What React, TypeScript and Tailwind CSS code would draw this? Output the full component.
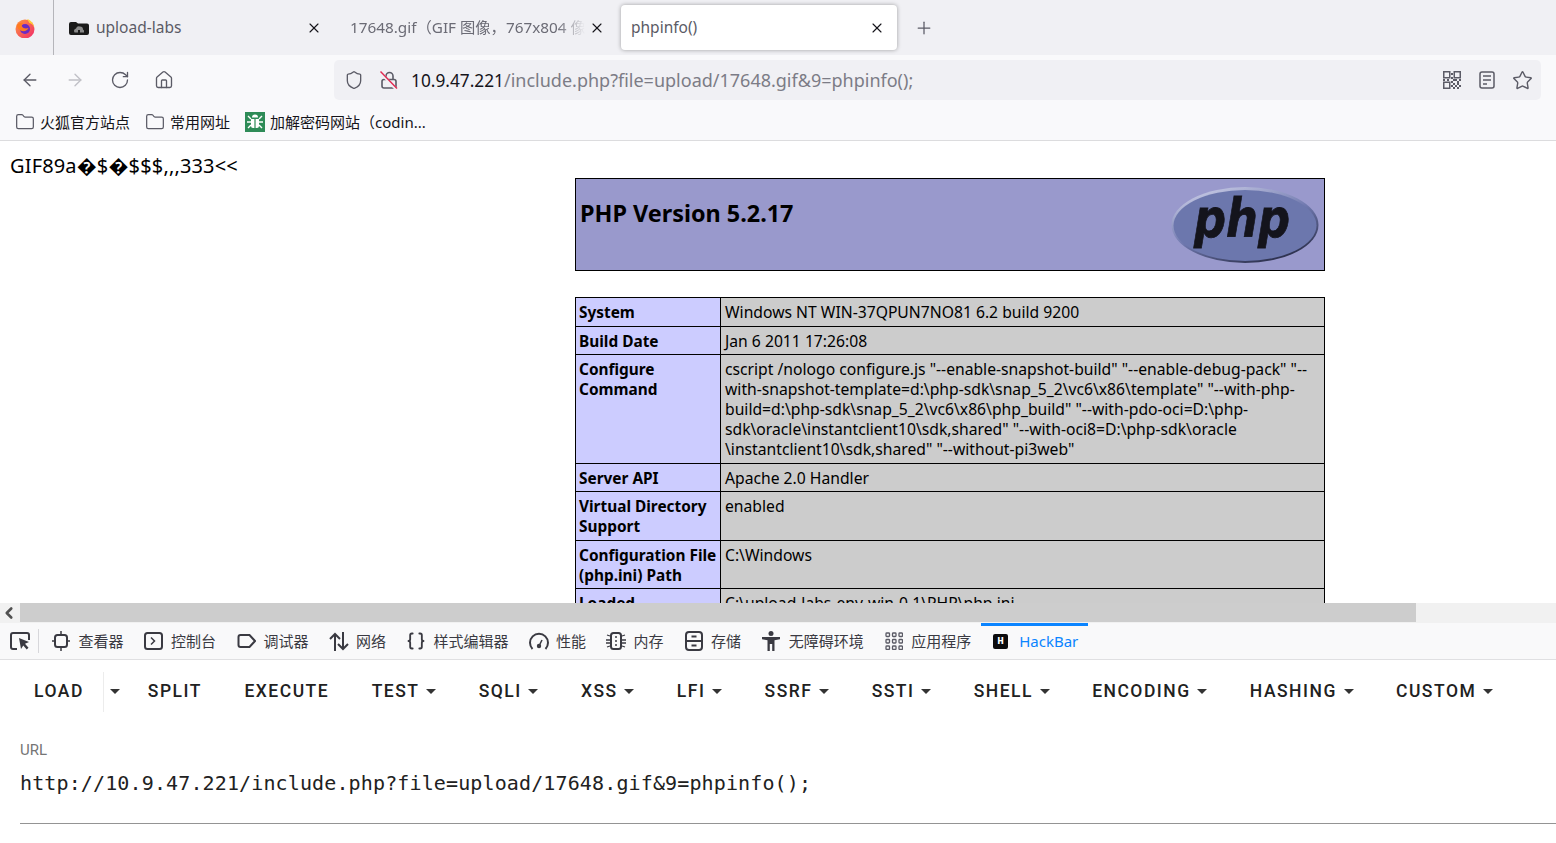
import React from 'react';
import { ArrowLeft, ArrowRight, RotateCw, Home, Shield, Star, X, Plus, Folder, Braces, ChevronLeft } from 'lucide-react';

const sans = "font-['Noto_Sans','Noto_Sans_CJK_SC',sans-serif]";

function FirefoxLogo() {
  return (
    <svg width="20" height="20" viewBox="0 0 20 20">
      <defs>
        <linearGradient id="fx" x1="0" y1="0" x2="1" y2="1">
          <stop offset="0" stopColor="#ff9a3c" />
          <stop offset="1" stopColor="#f0286c" />
        </linearGradient>
      </defs>
      <circle cx="10" cy="11" r="9.5" fill="url(#fx)" />
      <path d="M12 1c4 1 7 5 7.4 9-1-3-3-4.500-5-5C14 4 13 2.500 12 1z" fill="#ffcf33" />
      <circle cx="10" cy="11" r="5" fill="#6a2bc4" />
      <path d="M2 7c2-2 4-2.500 6-2 -1 1-1.500 2-1 3.500 1 2 4 2.500 6.500 1.500-1 3-5 4-8 2.500C3 11.500 2 9.500 2 7z" fill="#ff7a1f" />
    </svg>
  );
}

function UploadFavicon() {
  return (
    <svg width="20" height="16" viewBox="0 0 20 16">
      <path d="M0 4q0-2 2-2h5l2 1.500h9q2 0 2 2V13q0 2-2 2H2q-2 0-2-2z" fill="#1b1b1b" />
      <path d="M5.500 12.500q-1.500-3 1.500-4 1-3 4-2 3 0 3 3 1.500.5 1 3z" fill="#8b8b8b" />
      <rect x="9" y="10" width="2" height="3" fill="#1b1b1b" />
    </svg>
  );
}

function InsecureLock() {
  return (
    <svg width="20" height="20" viewBox="0 0 20 20" fill="none">
      <path d="M7 9.500V6a3.500 3.500 0 0 1 7 0v3.500" stroke="#5b5b66" strokeWidth="1.600" />
      <rect x="3" y="9.500" width="14" height="8.500" rx="2" stroke="#5b5b66" strokeWidth="1.600" />
      <path d="M2 3l15 16" stroke="#f0f0f4" strokeWidth="3" />
      <path d="M1.500 1.500l16.500 17" stroke="#e22850" strokeWidth="1.400" />
    </svg>
  );
}

function QrIcon() {
  return (
    <svg width="18" height="18" viewBox="0 0 18 18" fill="none">
      <g stroke="#5b5b66" strokeWidth="1.500">
        <rect x="0.750" y="0.750" width="6" height="6" />
        <rect x="11.250" y="0.750" width="6" height="6" />
        <rect x="0.750" y="11.250" width="6" height="6" />
      </g>
      <path d="M8 2h2v2H8zM8 6h2v2H8zM0 8h2v2H0zM4 8h2v2H4zM8 10h2v2H8zM12 8h2v2h-2zM16 8h2v2h-2zM10 8h2v2h-2zM14 10h2v2h-2zM10 12h2v2h-2zM14 12h2v2h-2zM8 14h2v2H8zM12 14h2v2h-2zM16 14h2v2h-2zM10 16h2v2h-2zM14 16h2v2h-2z" fill="#5b5b66" />
    </svg>
  );
}

function BugIcon() {
  return (
    <svg width="20" height="20" viewBox="0 0 20 20">
      <rect width="20" height="20" fill="#2e8b57" />
      <path d="M7 5.500a3 3 0 0 1 6 0z" fill="#fff" />
      <path d="M6 7h3.400v9H8q-2 0-2-2zM10.600 7H14v7q0 2-2 2h-1.400z" fill="#fff" />
      <path d="M3 4l3 3M17 4l-3 3M2 10h4M18 10h-4M3 16l3-3M17 16l-3-3" stroke="#fff" strokeWidth="1.400" />
    </svg>
  );
}

function ReaderIcon() {
  return (
    <svg width="16" height="18" viewBox="0 0 16 18" fill="none" stroke="#5b5b66" strokeWidth="1.500">
      <rect x="1" y="1" width="14" height="16" rx="2" />
      <path d="M4 5h8M4 9h8M4 13h4" />
    </svg>
  );
}

function PickerIcon() {
  return (
    <svg width="20" height="20" viewBox="0 0 20 20" fill="none">
      <path d="M7 18H3q-2 0-2-2V4q0-2 2-2h14q2 0 2 2v5" stroke="#3a3a42" strokeWidth="2" />
      <path d="M9 7l10 4-4 1.800 3.500 4-1.800 1.600-3.400-4L11 18z" fill="#3a3a42" />
    </svg>
  );
}

function InspectorIcon() {
  return (
    <svg width="18" height="20" viewBox="0 0 18 20" fill="none" stroke="#3a3a42" strokeWidth="2">
      <rect x="3" y="4" width="12" height="12" rx="2.500" />
      <path d="M9 0v4M9 16v4M0 10h3M15 10h3" strokeWidth="1.500" />
    </svg>
  );
}

function ConsoleIcon() {
  return (
    <svg width="19" height="18" viewBox="0 0 19 18" fill="none" stroke="#3a3a42" strokeWidth="2">
      <rect x="1" y="1" width="17" height="16" rx="2.500" />
      <path d="M7 5.500l3.500 3.500L7 12.500" strokeWidth="1.500" />
    </svg>
  );
}

function DebuggerIcon() {
  return (
    <svg width="19" height="16" viewBox="0 0 19 16" fill="none" stroke="#3a3a42" strokeWidth="2">
      <path d="M3.500 2h9L18 8l-5.500 6h-9Q1.500 14 1.500 12V4q0-2 2-2z" />
    </svg>
  );
}

function NetworkIcon() {
  return (
    <svg width="20" height="19" viewBox="0 0 20 19" fill="none" stroke="#3a3a42" strokeWidth="2">
      <path d="M6 19V2M1 7l5-5 5 5" />
      <path d="M14 0v17M9 12l5 5 5-5" />
    </svg>
  );
}

function PerformanceIcon() {
  return (
    <svg width="20" height="18" viewBox="0 0 20 18" fill="none" stroke="#3a3a42" strokeWidth="2">
      <path d="M3.500 17A9 9 0 1 1 16.500 17" />
      <circle cx="10" cy="14" r="2.200" fill="#3a3a42" stroke="none" />
      <path d="M10 14l3-6" strokeWidth="1.600" />
    </svg>
  );
}

function MemoryIcon() {
  return (
    <svg width="20" height="20" viewBox="0 0 20 20" fill="none" stroke="#3a3a42">
      <rect x="5" y="2" width="10" height="16" rx="2.500" strokeWidth="2" />
      <path d="M9 6h2M9 10h2M9 14h2" strokeWidth="1.500" />
      <path d="M1 4l3 1M0 9h4M0 12h4M1 16l3-1M19 4l-3 1M20 9h-4M20 12h-4M19 16l-3-1" strokeWidth="1.300" />
    </svg>
  );
}

function StorageIcon() {
  return (
    <svg width="18" height="20" viewBox="0 0 18 20" fill="none" stroke="#3a3a42" strokeWidth="2">
      <rect x="1" y="1" width="16" height="18" rx="3" />
      <path d="M1 10h16M6.500 5.500h5M6.500 14.500h5" />
    </svg>
  );
}

function AccessibilityIcon() {
  return (
    <svg width="18" height="20" viewBox="0 0 18 20" fill="#3a3a42">
      <circle cx="9" cy="2.500" r="2.500" />
      <path d="M0 6h18v2.200l-5.500 1V20h-2.300v-7H7.800v7H5.500V9.200L0 8.200z" />
    </svg>
  );
}

function AppsIcon() {
  const cells = [1, 7.500, 14];
  return (
    <svg width="18" height="18" viewBox="0 0 18 18" fill="none" stroke="#5b5b66" strokeWidth="1.300">
      {cells.map((y) => cells.map((x) => <rect key={`${x}-${y}`} x={x} y={y} width="3.500" height="3.500" rx="0.800" />))}
    </svg>
  );
}

function PhpLogo() {
  return (
    <svg width="150" height="78" viewBox="0 0 150 78">
      <defs>
        <linearGradient id="phpedge" x1="0.2" y1="0" x2="0.8" y2="1">
          <stop offset="0" stopColor="#c9cce6" />
          <stop offset="0.5" stopColor="#6f78ae" />
          <stop offset="1" stopColor="#23263f" />
        </linearGradient>
      </defs>
      <ellipse cx="75" cy="39" rx="73.500" ry="38" fill="url(#phpedge)" />
      <ellipse cx="75" cy="39.500" rx="71.500" ry="35.500" fill="#6c77ad" />
      <text x="24" y="51" fontFamily="'DejaVu Sans', sans-serif" fontWeight="700" fontStyle="italic" fontSize="53" textLength="96" lengthAdjust="spacingAndGlyphs" fill="#14141c" stroke="#14141c" strokeWidth="0.800">php</text>
    </svg>
  );
}

const devTabs = [
  { icon: <InspectorIcon />, label: '查看器' },
  { icon: <ConsoleIcon />, label: '控制台' },
  { icon: <DebuggerIcon />, label: '调试器' },
  { icon: <NetworkIcon />, label: '网络' },
  { icon: <Braces size={20} strokeWidth={2.200} color="#3a3a42" />, label: '样式编辑器' },
  { icon: <PerformanceIcon />, label: '性能' },
  { icon: <MemoryIcon />, label: '内存' },
  { icon: <StorageIcon />, label: '存储' },
  { icon: <AccessibilityIcon />, label: '无障碍环境' },
  { icon: <AppsIcon />, label: '应用程序' },
];

const hackMenu = [
  { label: 'SPLIT', caret: false },
  { label: 'EXECUTE', caret: false },
  { label: 'TEST', caret: true },
  { label: 'SQLI', caret: true },
  { label: 'XSS', caret: true },
  { label: 'LFI', caret: true },
  { label: 'SSRF', caret: true },
  { label: 'SSTI', caret: true },
  { label: 'SHELL', caret: true },
  { label: 'ENCODING', caret: true },
  { label: 'HASHING', caret: true },
  { label: 'CUSTOM', caret: true },
];

const infoRows = [
  { h: 'h-[29px]', k: 'System', v: 'Windows NT WIN-37QPUN7NO81 6.2 build 9200' },
  { h: 'h-[28px]', k: 'Build Date', v: 'Jan 6 2011 17:26:08' },
  {
    h: 'h-[109px]',
    k: 'Configure Command',
    v: 'cscript /nologo configure.js "--enable-snapshot-build" "--enable-debug-pack" "--\nwith-snapshot-template=d:\\php-sdk\\snap_5_2\\vc6\\x86\\template" "--with-php-\nbuild=d:\\php-sdk\\snap_5_2\\vc6\\x86\\php_build" "--with-pdo-oci=D:\\php-\nsdk\\oracle\\instantclient10\\sdk,shared" "--with-oci8=D:\\php-sdk\\oracle\n\\instantclient10\\sdk,shared" "--without-pi3web"',
  },
  { h: 'h-[28px]', k: 'Server API', v: 'Apache 2.0 Handler' },
  { h: 'h-[49px]', k: 'Virtual Directory Support', v: 'enabled' },
  { h: 'h-[48px]', k: 'Configuration File (php.ini) Path', v: 'C:\\Windows' },
  { h: 'h-[48px]', k: 'Loaded Configuration File', v: 'C:\\upload-labs-env-win-0.1\\PHP\\php.ini' },
];

function Caret() {
  return <span className="h-0 w-0 border-x-[5px] border-t-[5px] border-x-transparent border-t-[#333]" />;
}

export default function App() {
  return (
    <div className={`flex h-[843px] w-[1556px] flex-col overflow-hidden bg-white ${sans}`}>
      {/* Tab strip */}
      <div className="flex h-[55px] shrink-0 items-center bg-[#f0f0f4]">
        <div className="flex h-full w-[54px] items-center justify-center border-r border-[#b5b5ba] pr-[3px]">
          <FirefoxLogo />
        </div>
        <div className="flex h-[45px] w-[283px] items-center pl-[15px] pr-[15px] text-[15.500px] text-[#5b5b66]">
          <UploadFavicon />
          <span className="ml-[7px] flex-1">upload-labs</span>
          <X size={16} strokeWidth={1.700} color="#15141a" />
        </div>
        <div className="flex h-[45px] w-[284px] items-center pl-[13px] pr-[16px] text-[15.300px] text-[#6b6b75]">
          <span className="flex-1 overflow-hidden whitespace-nowrap [mask-image:linear-gradient(to_right,#000_88%,transparent_100%)]">17648.gif（GIF 图像，767x804 像素）</span>
          <X size={16} strokeWidth={1.700} color="#15141a" className="ml-[4px] shrink-0" />
        </div>
        <div className="flex h-[45px] w-[276px] items-center rounded-[4px] bg-white pl-[10px] pr-[12px] text-[15.500px] text-[#5b5b66] shadow-[0_0_4px_rgba(0,0,0,0.35)]">
          <span className="flex-1">phpinfo()</span>
          <X size={16} strokeWidth={1.700} color="#15141a" />
        </div>
        <Plus size={20} strokeWidth={1.500} color="#5b5b66" className="ml-[17px]" />
      </div>

      {/* Navigation toolbar */}
      <div className="flex h-[50px] shrink-0 items-center bg-[#f9f9fb] pl-[20px] pr-[15px]">
        <ArrowLeft size={20} strokeWidth={1.600} color="#5b5b66" />
        <ArrowRight size={20} strokeWidth={1.600} color="#c0c0c6" className="ml-[25px]" />
        <RotateCw size={20} strokeWidth={1.600} color="#5b5b66" className="ml-[25px]" />
        <Home size={20} strokeWidth={1.600} color="#5b5b66" className="ml-[24px]" />
        <div className="ml-[160px] flex h-[40px] flex-1 items-center rounded-[5px] bg-[#f0f0f4] pl-[10px] pr-[8px]">
          <Shield size={20} strokeWidth={1.600} color="#5b5b66" />
          <span className="ml-[15px]"><InsecureLock /></span>
          <span className="ml-[12px] text-[17.300px] text-[#15141a]">10.9.47.221<span className="text-[18px] text-[#7c7c86]">/include.php?file=upload/17648.gif&amp;9=phpinfo();</span></span>
          <span className="flex-1" />
          <QrIcon />
          <span className="ml-[18px]"><ReaderIcon /></span>
          <Star size={21} strokeWidth={1.600} color="#5b5b66" className="ml-[17px]" />
        </div>
      </div>

      {/* Bookmarks */}
      <div className="flex h-[36px] shrink-0 items-center border-b border-[#dcdcde] bg-[#f9f9fb] pb-[1px] pl-[15px] text-[15px] text-[#15141a]">
        <Folder size={20} strokeWidth={1.500} color="#5b5b66" />
        <span className="ml-[5px]">火狐官方站点</span>
        <Folder size={20} strokeWidth={1.500} color="#5b5b66" className="ml-[15px]" />
        <span className="ml-[5px]">常用网址</span>
        <span className="ml-[15px]"><BugIcon /></span>
        <span className="ml-[5px]">加解密码网站（codin...</span>
      </div>

      {/* Page viewport */}
      <div className="h-[462px] shrink-0 overflow-hidden bg-white text-black">
        <p className="pl-[10px] pt-[12px] text-[20px] leading-[25px] tracking-[0.150px]">GIF89a�$�$$$,,,333&lt;&lt;</p>
        <div className="ml-[575px] flex h-[93px] w-[750px] justify-between border border-black bg-[#9999cc] pl-[4px] pr-[4px]">
          <h1 className="pt-[18px] text-[23.400px] font-bold leading-[32px]">PHP Version 5.2.17</h1>
          <div className="pt-[7px]"><PhpLogo /></div>
        </div>
        <table className="ml-[575px] mt-[26px] w-[750px] table-fixed border-collapse text-[15.700px] leading-[20px]">
          <tbody>
            {infoRows.map((row) => (
              <tr key={row.k} className={row.h}>
                <td className="w-[145px] border border-black bg-[#ccccff] pl-[3px] pt-[5px] align-top text-[15.400px] font-bold">{row.k}</td>
                <td className="border border-black bg-[#cccccc] px-[4px] pt-[4px] align-top whitespace-pre-line">{row.v}</td>
              </tr>
            ))}
          </tbody>
        </table>
      </div>

      {/* Horizontal scrollbar */}
      <div className="flex h-[20px] shrink-0 bg-[#f1f1f1]">
        <div className="flex w-[20px] items-center justify-center pr-[2px]">
          <ChevronLeft size={18} strokeWidth={3.500} color="#505050" />
        </div>
        <div className="h-[19px] w-[1396px] bg-[#cdcdcd]" />
      </div>

      {/* Devtools tabs */}
      <div className="flex h-[37px] shrink-0 items-center border-b border-[#e0e0e2] bg-[#f9f9fa] text-[15px] text-[#3a3a42]">
        <div className="flex h-[24px] w-[39px] items-center border-r border-[#d7d7db] pl-[10px]">
          <PickerIcon />
        </div>
        <div className="ml-[12px] flex items-center gap-[20px]">
          {devTabs.map((tab) => (
            <div key={tab.label} className="flex items-center gap-[7.500px]">
              <span className="flex w-[20px] justify-center">{tab.icon}</span>
              <span>{tab.label}</span>
            </div>
          ))}
        </div>
        <div className="ml-[10px] flex h-full w-[107px] items-center border-t-[3px] border-[#0a84ff] pb-[3px] pl-[12px] text-[#0a84ff]">
          <span className="flex h-[15px] w-[15px] items-center justify-center rounded-[2px] bg-[#0c0c0d] font-['Liberation_Mono',monospace] text-[11px] font-bold text-white">H</span>
          <span className="ml-[11px]">HackBar</span>
        </div>
      </div>

      {/* HackBar menu */}
      <div className="flex h-[61px] shrink-0 items-center pl-[34px] pt-[2px] font-['Roboto',sans-serif] text-[17.500px] font-medium tracking-[1.500px] text-[#212121]">
        <span>LOAD</span>
        <div className="ml-[19px] flex h-[40px] w-[45px] items-center border-l border-[#ececec] pl-[6px]">
          <Caret />
        </div>
        <div className="flex items-center gap-[42.500px]">
          {hackMenu.map((item) => (
            <span key={item.label} className="flex items-center gap-[6.700px] whitespace-nowrap">
              {item.label}
              {item.caret && <Caret />}
            </span>
          ))}
        </div>
      </div>

      {/* URL field */}
      <div className="ml-[20px] mt-[19px] border-b border-[#949494] pb-[28px] font-['Roboto',sans-serif]">
        <p className="text-[15px] leading-[20px] text-[#757575]">URL</p>
        <p className="mt-[11px] font-['DejaVu_Sans_Mono',monospace] text-[20px] leading-[24px] tracking-[0.130px] text-[#212121]">http://10.9.47.221/include.php?file=upload/17648.gif&amp;9=phpinfo();</p>
      </div>
    </div>
  );
}
